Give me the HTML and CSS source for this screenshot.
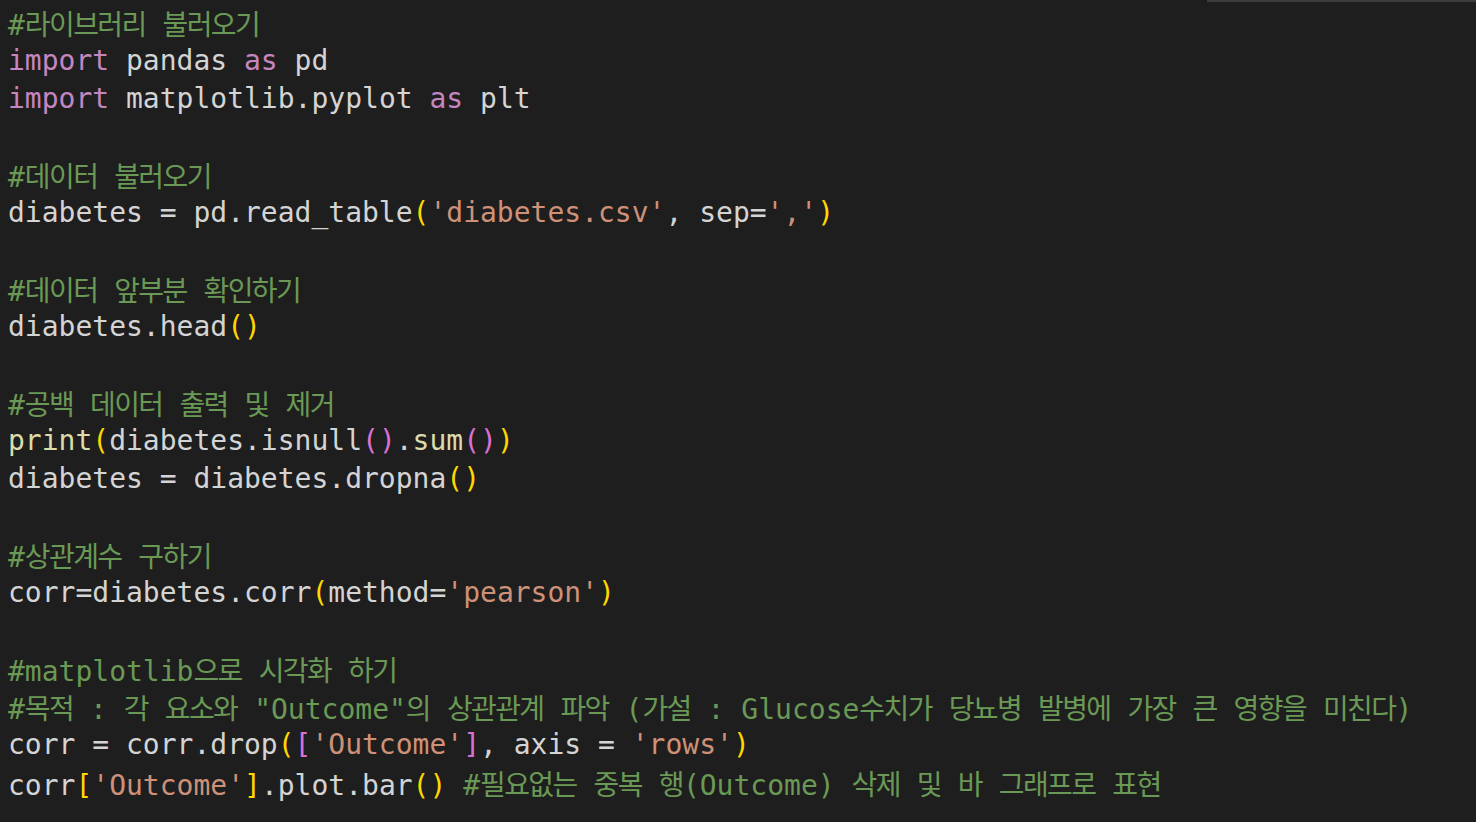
FILE: index.html
```html
<!DOCTYPE html>
<html lang="ko">
<head>
<meta charset="utf-8">
<title>diabetes</title>
<link rel="stylesheet" href="styles.css">
</head>
<body>
<div class="topbar"><div class="shadow"></div></div>
<div class="editor">
<div class="ln"><span class="c">#<span class="k">라이브러리</span> <span class="k">불러오기</span></span></div>
<div class="ln"><span class="kw">import</span> pandas <span class="kw">as</span> pd</div>
<div class="ln"><span class="kw">import</span> matplotlib.pyplot <span class="kw">as</span> plt</div>
<div class="ln"></div>
<div class="ln"><span class="c">#<span class="k">데이터</span> <span class="k">불러오기</span></span></div>
<div class="ln">diabetes = pd.read_table<span class="b1">(</span><span class="s">'diabetes.csv'</span>, sep=<span class="s">','</span><span class="b1">)</span></div>
<div class="ln"></div>
<div class="ln"><span class="c">#<span class="k">데이터</span> <span class="k">앞부분</span> <span class="k">확인하기</span></span></div>
<div class="ln">diabetes.head<span class="b1">()</span></div>
<div class="ln"></div>
<div class="ln"><span class="c">#<span class="k">공백</span> <span class="k">데이터</span> <span class="k">출력</span> <span class="k">및</span> <span class="k">제거</span></span></div>
<div class="ln"><span class="fn">print</span><span class="b1">(</span>diabetes.isnull<span class="b2">()</span>.<span class="fn">sum</span><span class="b2">()</span><span class="b1">)</span></div>
<div class="ln">diabetes = diabetes.dropna<span class="b1">()</span></div>
<div class="ln"></div>
<div class="ln"><span class="c">#<span class="k">상관계수</span> <span class="k">구하기</span></span></div>
<div class="ln">corr=diabetes.corr<span class="b1">(</span>method=<span class="s">'pearson'</span><span class="b1">)</span></div>
<div class="ln"></div>
<div class="ln"><span class="c">#matplotlib<span class="k">으로</span> <span class="k">시각화</span> <span class="k">하기</span></span></div>
<div class="ln"><span class="c">#<span class="k">목적</span> : <span class="k">각</span> <span class="k">요소와</span> "Outcome"<span class="k">의</span> <span class="k">상관관계</span> <span class="k">파악</span> (<span class="k">가설</span> : Glucose<span class="k">수치가</span> <span class="k">당뇨병</span> <span class="k">발병에</span> <span class="k">가장</span> <span class="k">큰</span> <span class="k">영향을</span> <span class="k">미친다</span>)</span></div>
<div class="ln">corr = corr.drop<span class="b1">(</span><span class="b2">[</span><span class="s">'Outcome'</span><span class="b2">]</span>, axis = <span class="s">'rows'</span><span class="b1">)</span></div>
<div class="ln">corr<span class="b1">[</span><span class="s">'Outcome'</span><span class="b1">]</span>.plot.bar<span class="b1">()</span> <span class="c">#<span class="k">필요없는</span> <span class="k">중복</span> <span class="k">행</span>(Outcome) <span class="k">삭제</span> <span class="k">및</span> <span class="k">바</span> <span class="k">그래프로</span> <span class="k">표현</span></span></div>
</div>
</body>
</html>
```

FILE: styles.css
```css
html, body {
  margin: 0;
  padding: 0;
  background: #1e1e1e;
  height: 100%;
  overflow: hidden;
}

.topbar {
  display: flex;
  height: 2px;
}

.shadow {
  margin-left: auto;
  width: 269px;
  height: 2px;
  background: #3c3c3c;
}

.editor {
  padding: 2px 0 0 8px;
  font-family: "DejaVu Sans Mono", "Liberation Mono", "Noto Sans CJK KR", monospace;
  font-size: 28px;
  color: #d4d4d4;
}

.ln {
  height: 38px;
  line-height: 38px;
  white-space: pre;
}

.k {
  font-family: "Noto Sans CJK KR", sans-serif;
  font-size: 28px;
  letter-spacing: -1.6px;
}

.c { color: #6a9955; }
.kw { color: #c586c0; }
.s { color: #ce9178; }
.fn { color: #dcdcaa; }
.b1 { color: #ffd700; }
.b2 { color: #da70d6; }
```
